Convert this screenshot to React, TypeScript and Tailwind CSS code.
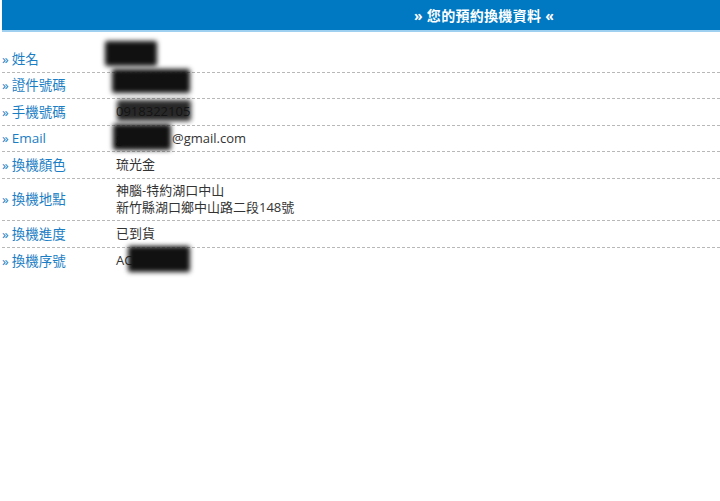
import React from 'react';

type Row = {
  label: string;
  value: React.ReactNode;
  tall?: boolean;
};

// 遮蔽用的黑色模糊塊
const Redact: React.FC<{ className: string }> = ({ className }) => (
  <span className={`absolute bg-[#111] blur-[2.5px] rounded-[2px] ${className}`} />
);

const rows: Row[] = [
  {
    label: '姓名',
    value: (
      <span className="relative inline-block h-5 w-10">
        <Redact className="left-[-11px] top-[-5px] w-[52px] h-[25px]" />
      </span>
    ),
  },
  {
    label: '證件號碼',
    value: (
      <span className="relative inline-block h-5 w-20">
        <Redact className="left-[-4px] top-[-4px] w-[78px] h-[24px]" />
      </span>
    ),
  },
  {
    label: '手機號碼',
    value: (
      <span className="relative inline-block">
        0918322105
        <Redact className="left-[1px] top-[-2px] w-[74px] h-[21px] opacity-90" />
      </span>
    ),
  },
  {
    label: 'Email',
    value: (
      <span className="relative inline-block">
        <span className="relative inline-block w-[56px]">
          g
          <Redact className="left-[-3px] top-[-5px] w-[58px] h-[26px]" />
        </span>
        @gmail.com
      </span>
    ),
  },
  { label: '換機顏色', value: '琉光金' },
  {
    label: '換機地點',
    value: (
      <div className="leading-[17px]">
        <div>神腦-特約湖口中山</div>
        <div>新竹縣湖口鄉中山路二段148號</div>
      </div>
    ),
    tall: true,
  },
  { label: '換機進度', value: '已到貨' },
  {
    label: '換機序號',
    value: (
      <span className="relative inline-block">
        AC98
        <Redact className="left-[12px] top-[-5px] w-[62px] h-[26px]" />
      </span>
    ),
  },
];

const App: React.FC = () => {
  return (
    <div
      className="w-[720px] h-[501px] bg-white overflow-hidden text-[13px]"
      style={{ fontFamily: '"Segoe UI", "Open Sans", "Noto Sans CJK TC", sans-serif' }}
    >
      {/* 標題列 */}
      <div className="ml-[2px] h-[32px] bg-[#0079c2] border-b-2 border-[#9fd0f0] flex items-center pl-[412px]">
        <h1 className="text-white font-bold text-[14px] tracking-[0.3px]">» 您的預約換機資料 «</h1>
      </div>

      {/* 資料表 */}
      <div className="mt-[14px] ml-[2px]">
        {rows.map((row, idx) => (
          <div
            key={row.label}
            className={`flex items-center ${row.tall ? 'h-[42px]' : 'h-[26.6px]'} ${
              idx < rows.length - 1 ? 'border-b border-dashed border-[#b8b8b8]' : ''
            }`}
          >
            <div className="w-[114px] shrink-0 text-[#1b7ec4] text-[13.5px]">
              <span className="mr-[3px]">»</span>
              {row.label}
            </div>
            <div className="text-[#333]">{row.value}</div>
          </div>
        ))}
      </div>
    </div>
  );
};

export default App;
